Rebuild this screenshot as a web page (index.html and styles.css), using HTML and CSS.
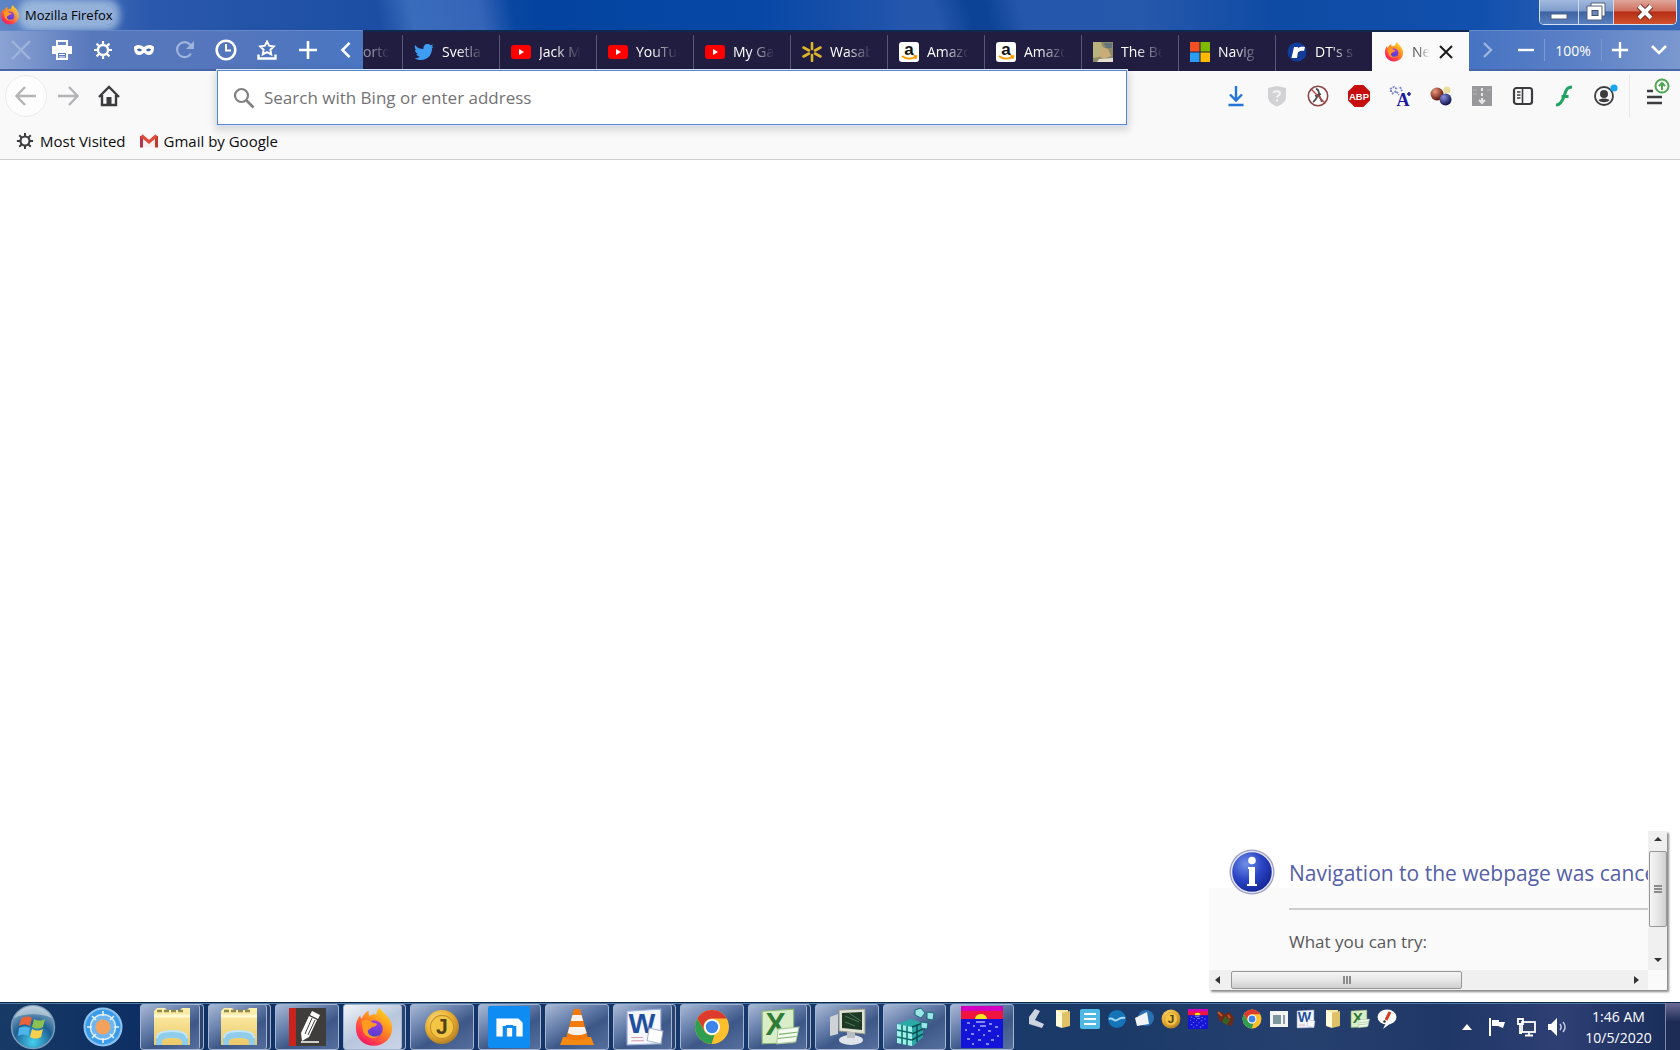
FILE: index.html
```html
<!DOCTYPE html>
<html lang="en">
<head>
<meta charset="utf-8">
<title>Mozilla Firefox</title>
<link rel="stylesheet" href="styles.css">
</head>
<body>
<svg class="sprite" aria-hidden="true">
  <defs>
    <linearGradient id="ffBody" x1="0.9" y1="0" x2="0.2" y2="1"><stop offset="0" stop-color="#ffe226"/><stop offset="0.45" stop-color="#ff8a1e"/><stop offset="0.8" stop-color="#ff3750"/><stop offset="1" stop-color="#e5156b"/></linearGradient>
    <linearGradient id="ffCore" x1="0" y1="0" x2="0" y2="1"><stop offset="0" stop-color="#a73be0"/><stop offset="1" stop-color="#4b3fd0"/></linearGradient>
    <linearGradient id="folder" x1="0" y1="0" x2="0" y2="1"><stop offset="0" stop-color="#fdf0ad"/><stop offset="1" stop-color="#ecc968"/></linearGradient>
    <radialGradient id="gold" cx="0.4" cy="0.35" r="0.7"><stop offset="0" stop-color="#fff0a0"/><stop offset="0.6" stop-color="#e8ab2c"/><stop offset="1" stop-color="#a87a26"/></radialGradient>
    <radialGradient id="orb" cx="0.5" cy="0.85" r="0.9"><stop offset="0" stop-color="#46d0f0"/><stop offset="0.5" stop-color="#1d5f94"/><stop offset="1" stop-color="#a9bfce"/></radialGradient>
    <radialGradient id="info" cx="0.35" cy="0.3" r="0.8"><stop offset="0" stop-color="#6f8fe8"/><stop offset="0.5" stop-color="#2a45c4"/><stop offset="1" stop-color="#101f8c"/></radialGradient>
    <radialGradient id="ballRed" cx="0.35" cy="0.3" r="0.7"><stop offset="0" stop-color="#f09a80"/><stop offset="1" stop-color="#5c1208"/></radialGradient>
    <radialGradient id="ballBlue" cx="0.35" cy="0.3" r="0.7"><stop offset="0" stop-color="#8a90e0"/><stop offset="1" stop-color="#10124c"/></radialGradient>
  </defs>
  <symbol id="firefox" viewBox="0 0 32 32">
    <path d="M16 31C7.500 31 1.500 25 1.500 16.500c0-4 1-7 3.500-10 .2 1.500.5 2.300 1.200 3C7.500 6 9.500 4 12 3c-.5 1.500-.3 3 .5 4.300C14 6 16 5.600 18 6c0-2.500 1-4.500 2.500-5.500C22 4 30.500 8 30.500 17c0 8-6.500 14-14.500 14z" fill="url(#ffBody)"/>
    <circle cx="16" cy="17.500" r="7" fill="url(#ffCore)"/>
    <path d="M6 11c4-2 7 0 9 1.500 1.500.3 2.500.5 3.500 1-.5 1.800-2.500 2-4 2.500-1 1.500-3 1.500-3.500 3 0 4 5 6 9 3.500C17 27 8 25 7 18z" fill="#ff9a20"/>
  </symbol>
  <symbol id="youtube" viewBox="0 0 20 16"><rect x="0" y="1" width="20" height="14" rx="3" fill="#f00"/><path d="M8 5v6l5-3z" fill="#fff"/></symbol>
  <symbol id="amazon" viewBox="0 0 20 20"><rect width="20" height="20" rx="3" fill="#fff"/><text x="10" y="13" text-anchor="middle" font-family="Liberation Sans, sans-serif" font-weight="700" font-size="17" fill="#111">a</text><path d="M3 14c4 3.500 10 3.500 14 .5M14.500 13.500l3 .6-1 2.800" fill="none" stroke="#f90" stroke-width="1.700"/></symbol>
  <symbol id="gear" viewBox="0 0 20 20"><circle cx="10" cy="10" r="5" fill="none" stroke="currentColor" stroke-width="2.400"/><path d="M10 1v3.500M10 15.500V19M1 10h3.500M15.500 10H19M3.600 3.600l2.600 2.600M13.800 13.800l2.600 2.600M3.600 16.400l2.600-2.600M13.800 6.200l2.600-2.600" stroke="currentColor" stroke-width="2.200"/></symbol>
  <symbol id="plus" viewBox="0 0 20 20"><path d="M10 1v18M1 10h18" stroke="currentColor" stroke-width="2.600"/></symbol>
  <symbol id="explorer" viewBox="0 0 40 40"><path d="M2 4l3-3h8l2 2h13l2-2h8v37H2z" fill="url(#folder)"/><path d="M5 4h28" stroke="#8d8a4c" stroke-width="2.500" stroke-dasharray="5 2"/><path d="M2 9h36" stroke="#fff7cf" stroke-width="3"/><path d="M4 38V31c0-5 6-7 16-7s16 2 16 7v7h-6v-3c0-3-3-4-10-4s-10 1-10 4v3z" fill="#8fcdeb"/><path d="M5 31c0-5 6-7 15-7s15 2 15 7" fill="none" stroke="#c5e7f5" stroke-width="2"/></symbol>
  <symbol id="chrome" viewBox="0 0 36 36"><circle cx="18" cy="18" r="17" fill="#fbc02d"/><path d="M3.300 9.500A17 17 0 0 1 32.700 9.500H18a8.500 8.500 0 0 0-7.400 12.700z" fill="#dd3b2e"/><path d="M3.300 9.500l7.300 12.700A8.500 8.500 0 0 0 20.500 26L17.500 35A17 17 0 0 1 3.300 9.500z" fill="#2f9e50"/><circle cx="18" cy="18" r="8" fill="#fff"/><circle cx="18" cy="18" r="6.200" fill="#3c84e8"/></symbol>
  <symbol id="coin" viewBox="0 0 34 34"><circle cx="17" cy="17" r="16" fill="url(#gold)"/><circle cx="17" cy="17" r="11" fill="#f3c544" stroke="#c58f25"/><text x="17" y="24" text-anchor="middle" font-family="Liberation Sans, sans-serif" font-weight="700" font-size="20" fill="#4f4118">J</text></symbol>
  <symbol id="word" viewBox="0 0 38 36"><path d="M2 3l32-2v33L2 35z" fill="#f6f8fd" stroke="#9fb4dc"/><text x="16" y="24" text-anchor="middle" font-family="Liberation Sans, sans-serif" font-weight="700" font-size="27" fill="#1f4f9f">W</text><path d="M23 19l13 3-2 12-13-3z" fill="#fff" stroke="#a9b4cc"/><path d="M6 28h11M6 31h12" stroke="#d79bb0"/></symbol>
  <symbol id="excel" viewBox="0 0 38 36"><path d="M2 3l30-2v32L2 34z" fill="#d9edc9" stroke="#86b56f"/><text x="15" y="26" text-anchor="middle" font-family="Liberation Sans, sans-serif" font-weight="700" font-size="29" fill="#2f7d35">X</text><path d="M17 20l20-2-3 14-18 2z" fill="#f3faee" stroke="#a8c69a"/><path d="M18 25l17-2M17 29l17-2" stroke="#7cb06c"/></symbol>
  <symbol id="sunset" viewBox="0 0 42 42"><rect width="42" height="42" fill="#1414d8"/><rect width="42" height="7" fill="#d400c0"/><rect y="5" width="42" height="8" fill="#f01440"/><path d="M14 13a6 5 0 0 1 12 0z" fill="#ffe820"/><path d="M6 17h3M15 16h9M28 18h3M12 20h2M19 20h6M34 21h3M4 24h2M17 24h2M27 25h3M10 28h3M22 29h2M36 30h2M6 33h3M17 34h3M30 34h3M11 38h2M25 38h3" stroke="#a9aaff" stroke-width="1.500"/></symbol>
  <symbol id="smallfolder" viewBox="0 0 20 20"><path d="M3 1h12v16H3z" fill="#f5e8a5"/><path d="M3 1l6 3v15l-6-2z" fill="#fffbd8"/><path d="M9 4l8-2v15l-8 2z" fill="#dfc268"/></symbol>
</svg>

<div class="desktop">
  <header class="chrome-top">
    <div class="titlebar">
      <svg class="i20 title-icon"><use href="#firefox"/></svg>
      <h1 class="title">Mozilla Firefox</h1>
      <div class="caption">
        <button class="cap cap-min" aria-label="Minimize"><svg width="20" height="18" viewBox="0 0 20 18"><rect x="2" y="11" width="16" height="5" fill="#fff" stroke="#51607c"/></svg></button>
        <button class="cap cap-max" aria-label="Restore"><svg width="20" height="20" viewBox="0 0 20 20"><path d="M5 1h14v13h-3v4H1V4h4z" fill="#fff" stroke="#51607c"/><path d="M5 4h11v10" fill="none" stroke="#51607c"/><rect x="6" y="8.500" width="6" height="5" fill="#6d86b8" stroke="#44516c"/></svg></button>
        <button class="cap cap-close" aria-label="Close"><svg width="20" height="18" viewBox="0 0 20 18"><path d="M4 3l12 12M16 3L4 15" stroke="#6d2018" stroke-width="6"/><path d="M4 3l12 12M16 3L4 15" stroke="#fff" stroke-width="4"/></svg></button>
      </div>
    </div>

    <div class="tabbar">
      <div class="quick">
        <button class="tool dim" aria-label="Stop"><svg class="i20" viewBox="0 0 20 20"><path d="M1 1l18 18M19 1L1 19" stroke="currentColor" stroke-width="2.400"/></svg></button>
        <button class="tool" aria-label="Print"><svg class="i20" viewBox="0 0 20 20"><path d="M5 1h10v5H5z" fill="none" stroke="#fff" stroke-width="2"/><path d="M0 6h20v8h-4v-2H4v2H0z" fill="#fff"/><path d="M5 12h10v7H5z" fill="#5b7dc0" stroke="#fff" stroke-width="2"/><path d="M7 14.500h6M7 17h6" stroke="#fff"/></svg></button>
        <button class="tool" aria-label="Settings"><svg class="i20"><use href="#gear"/></svg></button>
        <button class="tool" aria-label="Private browsing"><svg class="i20" viewBox="0 0 20 20"><path d="M0 7c3-3 7-2 10 0 3-2 7-3 10 0 0 4-1 8-5 8-3 0-4-2-5-2s-2 2-5 2c-4 0-5-4-5-8z" fill="#fff"/><path d="M3 9.500c2-2 4-1 5 .5-1 1.500-4 2-5-.5zM17 9.500c-2-2-4-1-5 .5 1 1.500 4 2 5-.5z" fill="#3e61a8"/></svg></button>
        <button class="tool dim" aria-label="Reload"><svg class="i20" viewBox="0 0 20 20"><path d="M16 13.500A7.500 7.500 0 1 1 15.500 5L18 8" fill="none" stroke="currentColor" stroke-width="2.200"/><path d="M19 1v8h-8z" fill="currentColor"/></svg></button>
        <button class="tool" aria-label="History"><svg class="i22" viewBox="0 0 22 22"><circle cx="11" cy="11" r="9.300" fill="none" stroke="#fff" stroke-width="2.600"/><path d="M11 5v6.500h5" fill="none" stroke="#fff" stroke-width="2"/></svg></button>
        <button class="tool" aria-label="Bookmarks"><svg class="i20" viewBox="0 0 20 20"><path d="M10 1.500l2.100 4.200 4.700.7-3.400 3.300.8 4.600L10 12.100l-4.200 2.200.8-4.600L3.200 6.400l4.700-.7z" fill="none" stroke="#fff" stroke-width="2"/><path d="M1.500 14.500v4h17v-4" fill="none" stroke="#fff" stroke-width="2.400"/></svg></button>
        <button class="tool" aria-label="New tab"><svg class="i20"><use href="#plus"/></svg></button>
        <button class="tool" aria-label="Scroll tabs left"><svg class="i18" viewBox="0 0 20 20"><path d="M14 2L6 10l8 8" fill="none" stroke="#fff" stroke-width="2.800"/></svg></button>
      </div>
      <nav class="tabs" aria-label="Tabs">
        <button class="tab tab-cut"><span class="tab-label ghost">orto</span></button>
        <button class="tab"><svg class="i20" viewBox="0 0 20 20"><path d="M1 3c2.500 3 5 4 8.500 4C9 4 11 2 13.500 2c1.300 0 2.300.5 3 1.300L19 2.500l-1.500 2.300 2-.3L18 6.500C18 13 13.500 18 7 18c-2.500 0-4.500-.6-6.500-1.800 2.200.2 4-.4 5.500-1.600-2-.2-3.200-1.300-3.600-2.700H4C2 11 1 9.700 1 7.700l1.600.5C1 7 .3 5 1 3z" fill="#3d9df2"/></svg><span class="tab-label">Svetla</span></button>
        <button class="tab"><svg class="i20"><use href="#youtube"/></svg><span class="tab-label">Jack M</span></button>
        <button class="tab"><svg class="i20"><use href="#youtube"/></svg><span class="tab-label">YouTu</span></button>
        <button class="tab"><svg class="i20"><use href="#youtube"/></svg><span class="tab-label">My Ga</span></button>
        <button class="tab"><svg class="i20" viewBox="0 0 20 20"><path d="M10 1v6M10 13v6M1.500 5.500l5.500 3M18.500 5.500l-5.500 3M1.500 14.500l5.500-3M18.500 14.500l-5.500-3" stroke="#dcb52c" stroke-width="2.600" stroke-linecap="round"/></svg><span class="tab-label">Wasab</span></button>
        <button class="tab"><svg class="i20"><use href="#amazon"/></svg><span class="tab-label">Amazo</span></button>
        <button class="tab"><svg class="i20"><use href="#amazon"/></svg><span class="tab-label">Amazo</span></button>
        <button class="tab"><svg class="i20" viewBox="0 0 20 20"><rect width="20" height="20" fill="#8f8a68"/><path d="M0 0h8l3 8-5 7-6 1z" fill="#b9b27c"/><path d="M9 5l6 2 3 7-7 3-5-3z" fill="#c9ac78"/><path d="M11 1h8v5h-6z" fill="#65747c"/><path d="M6 17l14-1v4H4z" fill="#e6dfd0"/></svg><span class="tab-label">The Be</span></button>
        <button class="tab"><svg class="i20" viewBox="0 0 20 20"><path d="M0 0h9.500v9.500H0z" fill="#f25022"/><path d="M10.500 0H20v9.500h-9.500z" fill="#7fba00"/><path d="M0 10.500h9.500V20H0z" fill="#2a9df0"/><path d="M10.500 10.500H20V20h-9.500z" fill="#ffb900"/></svg><span class="tab-label">Navig</span></button>
        <button class="tab"><svg class="i20" viewBox="0 0 20 20"><circle cx="10" cy="10" r="9.500" fill="#123c9c"/><path d="M7 5h4l-.4 1.800C12 5 14 4.500 18 5l-1 4c-3.500-.6-5.700 0-6.300 2.500L10 16H4.500z" fill="#fff"/></svg><span class="tab-label">DT's s</span></button>
        <button class="tab tab-active"><svg class="i20"><use href="#firefox"/></svg><span class="tab-label">Ne</span><svg class="tab-x" width="14" height="14" viewBox="0 0 14 14"><path d="M1 1l12 12M13 1L1 13" stroke="#1b1b1b" stroke-width="2"/></svg></button>
      </nav>
      <div class="zoomer">
        <button class="tool dim" aria-label="Scroll tabs right"><svg class="i20" viewBox="0 0 20 20"><path d="M6 3l7 7-7 7" fill="none" stroke="currentColor" stroke-width="2.400"/></svg></button>
        <button class="tool" aria-label="Zoom out"><svg class="i18" viewBox="0 0 18 18"><path d="M1 9h16" stroke="#fff" stroke-width="2.400"/></svg></button>
        <button class="tool zoom-level">100%</button>
        <button class="tool" aria-label="Zoom in"><svg class="i18" viewBox="0 0 20 20"><use href="#plus"/></svg></button>
        <button class="tool" aria-label="All tabs"><svg class="i18" viewBox="0 0 18 18"><path d="M2 5l7 7 7-7" fill="none" stroke="#fff" stroke-width="2.600"/></svg></button>
      </div>
    </div>
  </header>

  <div class="navbar">
    <div class="nav-left">
      <button class="nav-btn nav-back" aria-label="Back"><svg class="i22" viewBox="0 0 22 22"><path d="M21 11H2M10 2L1.500 11l8.500 9" fill="none" stroke="#b4b4b6" stroke-width="2.400"/></svg></button>
      <button class="nav-btn" aria-label="Forward"><svg class="i22" viewBox="0 0 22 22"><path d="M1 11h19M12 2l8.500 9-8.500 9" fill="none" stroke="#b4b4b6" stroke-width="2.400"/></svg></button>
      <button class="nav-btn" aria-label="Home"><svg class="i22" viewBox="0 0 22 22"><path d="M1 12L11 2l10 10M4 10v10h14V10" fill="none" stroke="#3c3c3f" stroke-width="2.400"/><path d="M8.500 20v-8h5v8z" fill="#3c3c3f"/></svg></button>
    </div>
    <div class="urlbar">
      <svg class="i22" viewBox="0 0 22 22"><circle cx="8.500" cy="8.500" r="6.500" fill="none" stroke="#808083" stroke-width="2.200"/><path d="M13.500 13.500l7 7" stroke="#808083" stroke-width="2.600"/></svg>
      <input class="url-input" type="text" aria-label="Address" placeholder="Search with Bing or enter address">
    </div>
    <div class="nav-right">
      <button class="nav-btn" aria-label="Downloads"><svg class="i22" viewBox="0 0 22 22"><path d="M11 1v14M5 9.500l6 6 6-6M3.500 20h15" fill="none" stroke="#2474dc" stroke-width="2.400"/></svg></button>
      <button class="nav-btn" aria-label="Shield"><svg class="i22" viewBox="0 0 22 22"><path d="M2 3l9-2 9 2v9c0 5-5 8-9 9.500C7 20 2 17 2 12z" fill="#d2d2d4"/><path d="M7.500 8c1-2.500 6.500-2.500 6.500.5 0 2-3 2-3 4M11 14.500v2" fill="none" stroke="#f4f4f4" stroke-width="2"/></svg></button>
      <button class="nav-btn" aria-label="No script"><svg class="i22" viewBox="0 0 22 22"><circle cx="11" cy="11" r="9.700" fill="#fff" stroke="#8c4545" stroke-width="1.600"/><path d="M9 4c3 0 3 3 3 6l3 7M11 9c-1 4-2 6-5 8M8 11l6-2" fill="none" stroke="#4a4a4a" stroke-width="1.800"/><path d="M4.500 4.500l13 13" stroke="#b84848" stroke-width="1.400"/></svg></button>
      <button class="nav-btn" aria-label="Adblock Plus"><svg class="i22" viewBox="0 0 22 22"><path d="M6.600 0h8.800L22 6.600v8.800L15.400 22H6.600L0 15.400V6.600z" fill="#c70d0d"/><text x="11" y="14.500" text-anchor="middle" font-family="Liberation Sans, sans-serif" font-weight="700" font-size="9.500" fill="#fff">ABP</text></svg></button>
      <button class="nav-btn" aria-label="Translate"><svg class="i22" viewBox="0 0 22 22"><path d="M1 4l4-2 3 2M3 9l4-3 3 4M1 6h2M11 2l2 4" fill="none" stroke="#7a86c8" stroke-width="1.800" stroke-dasharray="2 1"/><text x="14" y="21" text-anchor="middle" font-family="Liberation Serif, serif" font-weight="700" font-size="18" fill="#1c1c9c">A</text><path d="M18 9h4M20 7v4" stroke="#1c1c9c" stroke-width="1.600"/></svg></button>
      <button class="nav-btn" aria-label="Containers"><svg class="i22" viewBox="0 0 22 22"><circle cx="17" cy="5" r="3.500" fill="#e8dd9a"/><circle cx="7" cy="9" r="6.500" fill="url(#ballRed)"/><circle cx="15.500" cy="14.500" r="6" fill="url(#ballBlue)"/></svg></button>
      <button class="nav-btn" aria-label="Archive"><svg class="i22" viewBox="0 0 22 22"><path d="M1 1h20v20H1z" fill="#98989a"/><path d="M11 3v3M11 8v3M11 13v5M8 15l3 3 3-3" fill="none" stroke="#e6e6e6" stroke-width="2"/><path d="M2 5h4M2 9h4M16 5h4" stroke="#b9b9bb"/></svg></button>
      <button class="nav-btn" aria-label="Sidebar"><svg class="i22" viewBox="0 0 22 22"><rect x="2" y="3" width="18" height="16" rx="2.500" fill="none" stroke="#3c3c3f" stroke-width="2.200"/><path d="M10.500 3v16" stroke="#3c3c3f" stroke-width="1.600"/><path d="M5 7h3.500M5 10h3.500M5 13h3.500" stroke="#3c3c3f" stroke-width="1.400"/></svg></button>
      <button class="nav-btn" aria-label="Flash"><svg class="i22" viewBox="0 0 22 22"><path d="M19 2c-5 0-6 3-7.500 8S8 20 3 20M8.500 11.500h7" fill="none" stroke="#1fa463" stroke-width="3"/></svg></button>
      <button class="nav-btn" aria-label="Account"><svg class="i26" viewBox="0 0 26 26"><circle cx="12" cy="13" r="9" fill="none" stroke="#3c3c3f" stroke-width="1.800"/><circle cx="12" cy="11" r="4" fill="#3c3c3f"/><path d="M6.500 17c2 3 9 3 11 0-3-2-8-2-11 0z" fill="#3c3c3f"/><circle cx="22" cy="5" r="3.600" fill="#16a7ef"/></svg></button>
      <button class="nav-btn nav-menu" aria-label="Menu"><svg width="26" height="30" viewBox="0 0 26 30"><path d="M2 14h6M2 20h15M2 26h15" stroke="#3c3c3f" stroke-width="2.400"/><circle cx="17" cy="9" r="6.500" fill="#fff" stroke="#4fa650" stroke-width="2"/><path d="M17 13V6M14 9l3-3 3 3" fill="none" stroke="#4fa650" stroke-width="2"/></svg></button>
    </div>
  </div>

  <nav class="bookmarks" aria-label="Bookmarks">
    <a class="bookmark" href="#"><svg class="i18"><use href="#gear"/></svg>Most Visited</a>
    <a class="bookmark" href="#"><svg class="i18" viewBox="0 0 18 18"><path d="M1 3h2l6 6 6-6h2v12H1z" fill="#f4f0f0"/><path d="M1.500 15.500V4" stroke="#b8344a" stroke-width="3"/><path d="M16.500 15.500V4" stroke="#c0392f" stroke-width="3"/><path d="M1.500 3.500L9 10l7.500-6.500" fill="none" stroke="#e04a3c" stroke-width="3"/></svg>Gmail by Google</a>
  </nav>

  <main class="page">
    <aside class="notice">
      <div class="notice-view">
        <svg class="notice-icon" viewBox="0 0 46 46"><circle cx="23" cy="23" r="22.500" fill="#9c9cc0"/><circle cx="23" cy="23" r="20.500" fill="url(#info)" stroke="#e4e4f4" stroke-width="1.500"/><circle cx="23" cy="11.500" r="3.800" fill="#fff"/><path d="M19 18h7v17h2v2H18v-2h2V20h-1z" fill="#fff"/></svg>
        <div class="notice-text">
          <h2>Navigation to the webpage was cance</h2>
          <p>What you can try:</p>
        </div>
      </div>
      <div class="vscroll"><span class="arrow up"></span><span class="thumb-v"><i></i><i></i><i></i></span><span class="arrow down"></span></div>
      <div class="hscroll"><span class="arrow left"></span><span class="thumb-h"><i></i><i></i><i></i></span><span class="arrow right"></span></div>
    </aside>
  </main>

  <footer class="taskbar">
    <button class="orb" aria-label="Start"><svg width="46" height="46" viewBox="0 0 46 46"><circle cx="23" cy="23" r="21.500" fill="url(#orb)" stroke="#7d9cb8" stroke-width="1.500"/><path d="M11 15c4-3 7-3 11-1l-2 8c-4-2-7-2-11 0z" fill="#e8623a"/><path d="M24 15c4 2 7 2 11 0l-2 8c-4 2-7 2-11 0z" fill="#8cc152"/><path d="M9 24c4-2 7-2 11 0l-2 8c-4-2-7-2-10 0z" fill="#4fb4ea"/><path d="M22 25c4 2 7 2 11 0l-2 8c-4 2-7 2-11 0z" fill="#f6cf4c"/><path d="M4 14a21 21 0 0 1 38 0c-10-5-28-5-38 0z" fill="#fff" opacity=".4"/></svg></button>
    <button class="pin" aria-label="Browser"><svg width="40" height="40" viewBox="0 0 40 40"><circle cx="20" cy="20" r="18.500" fill="#3b9be8" stroke="#8fc4f0" stroke-width="2"/><circle cx="20" cy="20" r="12.500" fill="#6fb6f0" stroke="#d8ecfb" stroke-width="1.500"/><path d="M20 4v5M20 31v5M4 20h5M31 20h5M9 9l4 4M27 27l4 4M9 31l4-4M27 13l4-4" stroke="#e6f3fd" stroke-width="1.600"/><circle cx="20" cy="20" r="7.500" fill="#f2a25c"/></svg></button>
    <div class="tasks">
      <button class="task stacked" aria-label="Folder"><svg class="i40"><use href="#explorer"/></svg></button>
      <button class="task stacked" aria-label="Folder"><svg class="i40"><use href="#explorer"/></svg></button>
      <button class="task" aria-label="Editor"><svg class="i40" viewBox="0 0 40 40"><path d="M2 1h7v38H2z" fill="#c8231c"/><path d="M9 1h30v38H9z" fill="#3f3c3c"/><path d="M25 4l8 4-2 4-8-4zM22 9l8 4-8 17-7 4-1-8z" fill="#fff"/><path d="M25 11l-7 16M28 13l-7 15" stroke="#3f3c3c"/><path d="M14 35h18" stroke="#fff" stroke-width="1.500"/></svg></button>
      <button class="task task-on stacked" aria-label="Firefox"><svg class="i40"><use href="#firefox"/></svg></button>
      <button class="task" aria-label="Coin"><svg class="i36"><use href="#coin"/></svg></button>
      <button class="task" aria-label="Maxthon"><svg class="i42" viewBox="0 0 40 40"><rect width="40" height="40" rx="2" fill="#0f8cf2"/><path d="M8 12h21l4 4v13h-6V19h-3v-1h-7v1h-3v10H8zM18 21h5v8h-5z" fill="#fff"/></svg></button>
      <button class="task" aria-label="VLC"><svg class="i40" viewBox="0 0 40 40"><path d="M6 30h28l3 8H3z" fill="#f58a12"/><path d="M17 2h6l8 29c-5 3-17 3-22 0z" fill="#f47a0c"/><path d="M15.500 8h9l1.700 6H13.800zM12.300 20h15.400l2 6c-6 3-13 3-19 0z" fill="#f6f2ec"/></svg></button>
      <button class="task stacked" aria-label="Word"><svg class="i40"><use href="#word"/></svg></button>
      <button class="task" aria-label="Chrome"><svg class="i36"><use href="#chrome"/></svg></button>
      <button class="task stacked" aria-label="Excel"><svg class="i40"><use href="#excel"/></svg></button>
      <button class="task" aria-label="Computer"><svg class="i40" viewBox="0 0 40 40"><path d="M12 3l26-1v25l-26-3z" fill="#dfe2d4" stroke="#8f9484"/><path d="M15 6l20-1v18l-20-2z" fill="#1e3a26"/><path d="M18 9l14 6M18 15l10 4M22 6l12 8" stroke="#4f7a52"/><path d="M3 10l8-3v20l-8 2z" fill="#cfd3d8"/><ellipse cx="24" cy="33" rx="12" ry="5" fill="#dfe3ea"/><path d="M20 25h8v6h-8z" fill="#b9bdc0"/></svg></button>
      <button class="task" aria-label="Registry"><svg class="i40" viewBox="0 0 40 40"><path d="M2 17l14-5 12 4v14l-10 9-16-3z" fill="#2ba9a6"/><path d="M2 17l15 3v19L2 36z" fill="#9ff0e8"/><path d="M7 18v19M12 19v19M2 23l15 3M2 30l15 3" stroke="#0d6b6c" stroke-width="1.500"/><path d="M17 20l11-4M17 27l11-5M17 33l11-6M22 18v17" stroke="#0b4f54" stroke-width="1.500"/><path d="M20 3l6-2 4 5-4 5-6-3zM32 5l7 1-1 7-6-1zM26 15l7 1-1 6-6-1z" fill="#9be6e6" stroke="#196a72"/></svg></button>
      <button class="task" aria-label="Sunset"><svg class="i42"><use href="#sunset"/></svg></button>
    </div>
    <div class="launch">
      <button class="mini" aria-label="Tool"><svg class="i20" viewBox="0 0 20 20"><path d="M9 0l5 2-5 9 9 4-2 4-13-4V8z" fill="#cdd3df"/></svg></button>
      <button class="mini" aria-label="Folder"><svg class="i20"><use href="#smallfolder"/></svg></button>
      <button class="mini" aria-label="List"><svg class="i20" viewBox="0 0 20 20"><rect width="20" height="20" rx="2" fill="#4fb9e6"/><path d="M4 5h12M4 10h12M4 15h12" stroke="#fff" stroke-width="2"/></svg></button>
      <button class="mini" aria-label="Office"><svg class="i20" viewBox="0 0 20 20"><circle cx="10" cy="10" r="9" fill="#1573b8"/><path d="M2 10c4-2 5 3 8 1s5-3 8-2" stroke="#a8d8f4" stroke-width="2" fill="none"/></svg></button>
      <button class="mini" aria-label="Mail"><svg class="i20" viewBox="0 0 20 20"><circle cx="12" cy="9" r="8" fill="#2b6fb5"/><path d="M1 9l12-6 2 12-12 2z" fill="#f1f5fa"/></svg></button>
      <button class="mini" aria-label="Coin"><svg class="i20"><use href="#coin"/></svg></button>
      <button class="mini" aria-label="Sunset"><svg class="i20"><use href="#sunset"/></svg></button>
      <button class="mini" aria-label="Game"><svg class="i20" viewBox="0 0 20 20"><path d="M2 2l8 3 5-2 4 6-2 8-7-2-6-4z" fill="#6d2a18"/><path d="M10 7l5 4-3 5-5-3z" fill="#3b5f22"/><path d="M3 3l4 4M13 6l2 3" stroke="#c0542a" stroke-width="2"/></svg></button>
      <button class="mini" aria-label="Chrome"><svg class="i20"><use href="#chrome"/></svg></button>
      <button class="mini" aria-label="Window"><svg class="i20" viewBox="0 0 20 20"><path d="M1 2h18v16H1z" fill="#f2f4f4"/><path d="M4 6h8v9H4z" fill="#7e96a0"/><path d="M15 6v9" stroke="#8d9ca4" stroke-width="2"/></svg></button>
      <button class="mini" aria-label="Word"><svg class="i20"><use href="#word"/></svg></button>
      <button class="mini" aria-label="Folder"><svg class="i20"><use href="#smallfolder"/></svg></button>
      <button class="mini" aria-label="Excel"><svg class="i20"><use href="#excel"/></svg></button>
      <button class="mini" aria-label="Notice"><svg class="i20" viewBox="0 0 20 20"><ellipse cx="10" cy="8" rx="9.500" ry="7.500" fill="#fff"/><path d="M9 14l-3 6 8-6z" fill="#fff"/><path d="M13 3l-4 8" stroke="#d0401c" stroke-width="3"/><circle cx="7.500" cy="12.500" r="1.300" fill="#333"/></svg></button>
    </div>
    <div class="tray">
      <button class="mini" aria-label="Show hidden icons"><svg width="10" height="6" viewBox="0 0 10 6"><path d="M5 0l5 6H0z" fill="#fff"/></svg></button>
      <button class="mini" aria-label="Action center"><svg class="i20" viewBox="0 0 20 20"><path d="M3 1v18" stroke="#fff" stroke-width="2"/><path d="M5 3h7v2h6l-2 6-5-2H5z" fill="#fff"/></svg></button>
      <button class="mini" aria-label="Network"><svg class="i20" viewBox="0 0 20 20"><rect x="5" y="5" width="13" height="10" fill="#31426b" stroke="#fff" stroke-width="1.800"/><path d="M8 18.500h8M12 15v3M1 2h5v5H1zM3 7v9h2" fill="none" stroke="#fff" stroke-width="1.800"/></svg></button>
      <button class="mini" aria-label="Volume"><svg class="i20" viewBox="0 0 20 20"><path d="M1 7h3l6-6v18l-6-6H1z" fill="#fff"/><path d="M13 7c1.500 2 1.500 4 0 6M16 5c2.500 3 2.500 7 0 10" fill="none" stroke="#c7cfe4" stroke-width="1.400"/></svg></button>
      <time class="clock"><span>1:46 AM</span><span>10/5/2020</span></time>
      <button class="peek" aria-label="Show desktop"></button>
    </div>
  </footer>
</div>
</body>
</html>
```
FILE: styles.css
```css
* { box-sizing: border-box; }

body {
  margin: 0;
  font-family: "Open Sans", "Noto Sans", sans-serif;
  font-size: 14px;
  color: #0c0c0d;
  background: #fff;
}

button {
  margin: 0;
  padding: 0;
  border: 0;
  background: none;
  font: inherit;
  color: inherit;
}

svg { display: block; flex: none; }

.sprite { position: absolute; width: 0; height: 0; }

.i18 { width: 18px; height: 18px; }
.i20 { width: 20px; height: 20px; }
.i22 { width: 22px; height: 22px; }
.i26 { width: 26px; height: 26px; }
.i36 { width: 36px; height: 36px; }
.i40 { width: 40px; height: 40px; }
.i42 { width: 42px; height: 42px; }

.desktop {
  display: flex;
  flex-direction: column;
  min-height: 100vh;
}

/* Glass title bar and tab strip */
.chrome-top {
  background:
    linear-gradient(78deg, transparent 23%, #3a6cbc 25%, #3565b8 29%, transparent 31%),
    linear-gradient(75deg, transparent 56%, #0c4396 58%, #0c4396 59%, transparent 61%),
    linear-gradient(90deg, #5f86c4 0%, #2a58ac 9%, #1c4fa4 22%, #0444a0 32%, #0747a6 45%, #2456ac 54%, #2658ac 68%, #0e4ba4 76%, #1250ae 88%, #3a69b8 100%);
}

.titlebar {
  display: flex;
  align-items: center;
  height: 30px;
}

.title-icon { margin-right: 4px; }

.title {
  margin: 0;
  font-size: 13px;
  font-weight: 400;
  line-height: 20px;
  color: #000;
  padding: 0 1px;
  border-radius: 8px;
  background: rgba(176, 200, 230, 0.75);
  box-shadow: 0 0 7px 6px rgba(176, 200, 230, 0.75);
}

.caption {
  display: flex;
  align-self: flex-start;
  margin: 0 3px 0 auto;
  height: 25px;
  border: 1px solid #d5e2f4;
  border-top: 0;
  border-radius: 0 0 5px 5px;
  overflow: hidden;
}

.cap { display: grid; place-items: center; }
.cap-min, .cap-max {
  border-right: 1px solid #cfdcf0;
  background: linear-gradient(#a3bade, #7f9ccc 45%, #3f64a4 50%, #5a80c0);
}
.cap-min { width: 39px; }
.cap-max { width: 35px; }
.cap-close {
  width: 62px;
  background: linear-gradient(#e0a79c, #cf6f5c 45%, #b62d16 50%, #d0512c);
}

.tabbar {
  display: flex;
  height: 41px;
  color: #fff;
}

.quick, .zoomer {
  display: flex;
  align-items: stretch;
  border-top: 1px solid #6488c8;
  border-bottom: 2px solid #4666a8;
}
.quick { background: linear-gradient(90deg, #8ba3d4, #5878bc 25%, #5576bc 60%, #4a76c2); }
.zoomer { background: linear-gradient(90deg, #4673c2, #5b80c6 50%, #7b98cf); }

.tool {
  display: grid;
  place-items: center;
  width: 41px;
}
.quick .tool:last-child { width: 35px; }
.dim { color: #9fb4dc; }

.zoomer .tool:nth-child(1) { width: 38px; }
.zoomer .tool:nth-child(2) { width: 37px; }
.zoomer .zoom-level {
  width: 58px;
  font-size: 14px;
  margin: 8px 0;
  border: solid #7c99d0;
  border-width: 0 1px;
}
.zoomer .tool:nth-child(4) { width: 36px; }
.zoomer .tool:nth-child(5) { width: 42px; }

.tabs {
  display: flex;
  flex: 1;
  min-width: 0;
  background: #211d40;
  border-top: 2px solid #10284e;
}

.tab {
  display: flex;
  flex: 1 1 0;
  align-items: center;
  gap: 8px;
  min-width: 0;
  padding: 0 12px;
  background: linear-gradient(#55587a, #55587a) 0 100% / 1px 36px no-repeat;
}
.tab-cut {
  flex: 0 0 39px;
  padding: 0 10px 0 0;
  background: none;
}

.tab-label {
  flex: 1;
  min-width: 0;
  overflow: hidden;
  white-space: nowrap;
  text-align: left;
  font-size: 14px;
  line-height: 20px;
  -webkit-mask-image: linear-gradient(90deg, #000 35%, transparent 92%);
  mask-image: linear-gradient(90deg, #000 35%, transparent 92%);
}
.ghost { opacity: 0.5; }

.tab-active {
  background: #fafafa;
  color: #555;
}
.tab-x { margin-right: 4px; }

/* Navigation toolbar */
.navbar {
  display: flex;
  align-items: center;
  justify-content: space-between;
  height: 50px;
  background: #f9f9fa;
  gap: 88px;
}

.nav-left {
  display: flex;
  align-items: center;
  padding-left: 5px;
}

.nav-btn {
  display: grid;
  place-items: center;
  width: 41px;
  height: 42px;
}
.nav-back {
  width: 42px;
  border: 1px solid #ebebed;
  border-radius: 50%;
  background: #fdfdfd;
}

.urlbar {
  display: flex;
  align-self: flex-start;
  align-items: center;
  flex: 1;
  gap: 9px;
  height: 55px;
  margin-top: -1px;
  padding: 0 15px;
  background: #fff;
  border: 1px solid #5a86cc;
  box-shadow: 0 0 0 1px #d5e4fb, 0 3px 8px 2px rgba(0, 0, 0, 0.15);
  z-index: 1;
}

.url-input {
  flex: 1;
  min-width: 0;
  padding: 0;
  border: 0;
  outline: 0;
  background: none;
  font: 17px/24px "Open Sans", "Noto Sans", sans-serif;
}
.url-input::placeholder { color: #737375; opacity: 1; }

.nav-right { display: flex; align-items: center; }
.nav-menu {
  width: 51px;
  margin-left: 4px;
  padding: 0 0 8px 6px;
  border-left: 1px solid #e8e8ea;
}

.bookmarks {
  display: flex;
  align-items: center;
  gap: 14px;
  height: 39px;
  padding: 2px 16px 0;
  background: #f9f9fa;
  border-bottom: 1px solid #cfcfd1;
}
.bookmark {
  display: flex;
  align-items: center;
  gap: 6px;
  font-size: 15px;
  line-height: 20px;
  color: #0c0c0d;
  text-decoration: none;
}
.bookmark svg { color: #3c3c3f; }

/* Page area with the notice in its corner */
.page {
  position: relative;
  flex: 1;
  background: #fff;
}

.notice {
  position: absolute;
  right: 13px;
  bottom: 12px;
  display: grid;
  grid-template: 139px 20px / 439px 19px;
  background: #fafafa;
  box-shadow: 2px 2px 2px #8a8a8a;
}

.notice-view {
  display: flex;
  gap: 14px;
  padding: 18px 0 0 20px;
  overflow: hidden;
  background: linear-gradient(#fff 57px, #fafafa 57px);
}
.notice-icon { width: 46px; height: 46px; }
.notice-text { flex: 1; min-width: 0; padding-top: 4px; }
.notice h2 {
  margin: 0;
  padding-bottom: 15px;
  border-bottom: 2px solid #cdcdcd;
  font-size: 21px;
  font-weight: 400;
  line-height: 40px;
  white-space: nowrap;
  color: #5560a8;
}
.notice p {
  margin: 19px 0 0;
  font-size: 17px;
  line-height: 26px;
  color: #575757;
}

.vscroll, .hscroll {
  display: flex;
  align-items: center;
  background: #f0f0f0;
}
.vscroll { flex-direction: column; padding: 6px 1px 8px; }
.hscroll { padding: 1px 9px 1px 6px; grid-column: 1; }

.thumb-v, .thumb-h {
  display: flex;
  align-items: center;
  justify-content: center;
  gap: 1px;
  border: 1px solid #979797;
  border-radius: 2px;
}
.thumb-v {
  flex-direction: column;
  width: 18px;
  height: 76px;
  margin: 10px 0 auto;
  background: linear-gradient(90deg, #f5f5f5, #e6e6e6 50%, #cfcfcf);
}
.thumb-h {
  width: 231px;
  height: 18px;
  margin: 0 auto 0 11px;
  background: linear-gradient(#f5f5f5, #e6e6e6 50%, #cfcfcf);
}
.thumb-v i { width: 8px; height: 2px; background: #8c8c8c; }
.thumb-h i { width: 2px; height: 8px; background: #8c8c8c; }

.arrow { width: 0; height: 0; border: 4px solid transparent; }
.up { border-top: 0; border-bottom-color: #333; }
.down { border-bottom: 0; border-top-color: #333; }
.left { border-left: 0; border-right: 5px solid #333; }
.right { border-right: 0; border-left: 5px solid #333; }

/* Taskbar */
.taskbar {
  display: flex;
  height: 48px;
  color: #fff;
  border-top: 1px solid #0d2a4c;
  box-shadow: inset 0 1px 0 #4d7ba4;
  background: linear-gradient(90deg, #173a66 0%, #0d2f63 8%, #16386c 45%, #1b3a68 66%, #26406e 78%, #1f3766 86%, #2e3f74 93%, #172c58 100%);
}

.orb, .pin { display: grid; place-items: center; }
.orb { width: 66px; }
.pin { width: 74px; }

.tasks {
  display: grid;
  grid-template-columns: repeat(13, 1fr);
  gap: 4px;
  flex: 1;
  padding-top: 1px;
}

.task {
  display: grid;
  place-items: center;
  border: 1px solid #a3b4d0;
  border-radius: 3px;
  background: linear-gradient(150deg, #a9b9d6 0%, #6880ac 35%, #3d5888 60%, #566f9e 100%);
}
.task-on { background: linear-gradient(150deg, #f1f3f9, #b8c6dd 50%, #cdd6e8); }
.stacked { box-shadow: inset -3px 0 0 #2a4370, inset -4px 0 0 #a3b4d0; }

.launch {
  display: flex;
  align-items: flex-start;
  padding: 6px 0 0 8px;
}
.mini {
  display: grid;
  place-items: center;
  width: 27px;
}

.tray {
  display: flex;
  align-items: center;
  margin-left: 52px;
}
.tray .mini { width: 30px; }

.clock {
  display: flex;
  flex-direction: column;
  align-items: center;
  width: 93px;
  font-size: 14px;
  line-height: 21px;
}

.peek {
  align-self: stretch;
  width: 15px;
  border-left: 1px solid #7f86ae;
  background: linear-gradient(#6b6a94, #1c2c54 40%);
}
```
